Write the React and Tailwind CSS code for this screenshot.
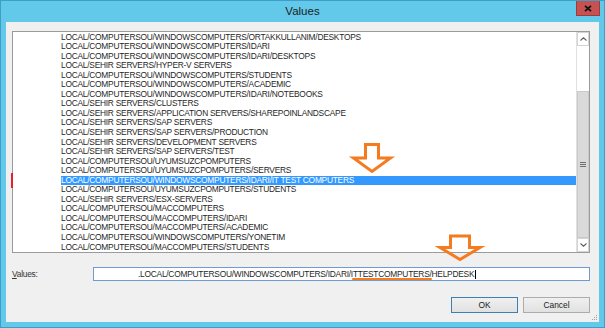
import React from "react";

const rows = [
  "LOCAL/COMPUTERSOU/WINDOWSCOMPUTERS/ORTAKKULLANIM/DESKTOPS",
  "LOCAL/COMPUTERSOU/WINDOWSCOMPUTERS/IDARI",
  "LOCAL/COMPUTERSOU/WINDOWSCOMPUTERS/IDARI/DESKTOPS",
  "LOCAL/SEHIR SERVERS/HYPER-V SERVERS",
  "LOCAL/COMPUTERSOU/WINDOWSCOMPUTERS/STUDENTS",
  "LOCAL/COMPUTERSOU/WINDOWSCOMPUTERS/ACADEMIC",
  "LOCAL/COMPUTERSOU/WINDOWSCOMPUTERS/IDARI/NOTEBOOKS",
  "LOCAL/SEHIR SERVERS/CLUSTERS",
  "LOCAL/SEHIR SERVERS/APPLICATION SERVERS/SHAREPOINLANDSCAPE",
  "LOCAL/SEHIR SERVERS/SAP SERVERS",
  "LOCAL/SEHIR SERVERS/SAP SERVERS/PRODUCTION",
  "LOCAL/SEHIR SERVERS/DEVELOPMENT SERVERS",
  "LOCAL/SEHIR SERVERS/SAP SERVERS/TEST",
  "LOCAL/COMPUTERSOU/UYUMSUZCPOMPUTERS",
  "LOCAL/COMPUTERSOU/UYUMSUZCPOMPUTERS/SERVERS",
  "LOCAL/COMPUTERSOU/WINDOWSCOMPUTERS/IDARI/IT TEST COMPUTERS",
  "LOCAL/COMPUTERSOU/UYUMSUZCPOMPUTERS/STUDENTS",
  "LOCAL/SEHIR SERVERS/ESX-SERVERS",
  "LOCAL/COMPUTERSOU/MACCOMPUTERS",
  "LOCAL/COMPUTERSOU/MACCOMPUTERS/IDARI",
  "LOCAL/COMPUTERSOU/MACCOMPUTERS/ACADEMIC",
  "LOCAL/COMPUTERSOU/WINDOWSCOMPUTERS/YONETIM",
  "LOCAL/COMPUTERSOU/MACCOMPUTERS/STUDENTS",
];

const SELECTED = 15;

export default function App() {
  return (
    <div className="w-[605px] h-[328px] bg-[#62c9ea] border border-[#3f9ec8] flex flex-col relative overflow-hidden font-['Liberation_Sans',Arial,sans-serif]">
      {/* Title bar */}
      <div className="h-[21px] flex items-center justify-center shrink-0">
        <span className="text-[11.5px] text-[#1d1d1d] leading-none pt-[1px]">Values</span>
      </div>

      {/* Close button */}
      <div className="absolute top-[-1px] right-[4px] w-[24px] h-[16px] bg-[#c75050] border border-[#9e3c3c] flex items-center justify-center">
        <svg width="8" height="7" viewBox="0 0 8 7">
          <path d="M1 0.8 L7 6.2 M7 0.8 L1 6.2" stroke="#111" strokeWidth="1.8" />
        </svg>
      </div>

      {/* Client area */}
      <div className="flex-1 mx-[5px] mb-[5px] bg-[#f0f0f0] pl-[6px] pr-[9px] pt-[9px] flex flex-col relative">
        {/* Listbox */}
        <div className="w-[578px] h-[222px] border border-[#9b9b9b] bg-white flex shrink-0">
          <div className="w-[563px] h-full overflow-hidden pt-[0.5px]">
            {rows.map((r, i) => (
              <div key={i} className="h-[9.55px] pl-[48px] text-[8.4px] tracking-[-0.25px] leading-[9.55px] whitespace-nowrap">
                {i === SELECTED ? (
                  <div className="bg-[#3399ff] text-white h-full">{r}</div>
                ) : (
                  <div className="text-[#1f1f1f] h-full">{r}</div>
                )}
              </div>
            ))}
          </div>
          {/* Scrollbar */}
          <div className="w-[13px] h-full flex flex-col bg-white border-l border-[#e0e0e0]">
            <div className="h-[14px] border border-[#d4d4d4] bg-white flex items-center justify-center shrink-0">
              <svg width="7" height="4" viewBox="0 0 7 4">
                <path d="M0.5 3.5 L3.5 0.8 L6.5 3.5" stroke="#606060" strokeWidth="1.1" fill="none" />
              </svg>
            </div>
            <div className="h-[45px] bg-white shrink-0" />
            <div className="h-[147px] bg-[#dadada] border border-[#c9c9c9] flex items-center justify-center shrink-0">
              <div className="flex flex-col gap-[1px]">
                <div className="w-[6px] h-[1px] bg-[#6e6e6e]" />
                <div className="w-[6px] h-[1px] bg-[#6e6e6e]" />
                <div className="w-[6px] h-[1px] bg-[#6e6e6e]" />
              </div>
            </div>
            <div className="h-[14px] border border-[#d4d4d4] bg-white flex items-center justify-center shrink-0">
              <svg width="7" height="4" viewBox="0 0 7 4">
                <path d="M0.5 0.5 L3.5 3.2 L6.5 0.5" stroke="#606060" strokeWidth="1.1" fill="none" />
              </svg>
            </div>
          </div>
        </div>

        {/* Values row */}
        <div className="mt-[14px] h-[14px] flex items-center shrink-0">
          <div className="w-[81px] text-[8.4px] tracking-[-0.25px] text-[#333]">
            <span className="underline">V</span>alues:
          </div>
          <div className="w-[497px] h-[14px] border border-[#6f9cd0] bg-white flex items-center pl-[44px] text-[8.4px] tracking-[-0.25px] text-[#1f1f1f] whitespace-nowrap">
            <span>.LOCAL/COMPUTERSOU/WINDOWSCOMPUTERS/IDARI/</span>
            <span className="relative">
              ITTESTCOMPUTERS
              <span className="absolute left-[1px] right-[-3px] top-[10px] h-[2px] rounded-full bg-[#f47b20]" />
            </span>
            <span>/HELPDESK</span>
            <span className="w-[1px] h-[9px] bg-black ml-[1px]" />
          </div>
        </div>

        {/* Buttons */}
        <div className="mt-[16px] flex justify-end gap-[5px] shrink-0">
          <div className="w-[67px] h-[16px] border border-[#3c7fb1] bg-gradient-to-b from-[#f0f0f0] to-[#e1e1e1] flex items-center justify-center text-[8.4px] text-[#1a1a1a]">
            OK
          </div>
          <div className="w-[67px] h-[16px] border border-[#acacac] bg-gradient-to-b from-[#f0f0f0] to-[#e1e1e1] flex items-center justify-center text-[8.4px] text-[#1a1a1a]">
            Cancel
          </div>
        </div>

        {/* Size grip */}
        <svg className="absolute right-[1px] bottom-[1px]" width="7" height="7" viewBox="0 0 7 7">
          <rect x="5" y="1" width="1" height="1" fill="#a0a0a0" />
          <rect x="3" y="3" width="1" height="1" fill="#a0a0a0" />
          <rect x="5" y="3" width="1" height="1" fill="#a0a0a0" />
          <rect x="1" y="5" width="1" height="1" fill="#a0a0a0" />
          <rect x="3" y="5" width="1" height="1" fill="#a0a0a0" />
          <rect x="5" y="5" width="1" height="1" fill="#a0a0a0" />
        </svg>
      </div>

      {/* Overlays: red marker & orange arrows */}
      <svg className="absolute top-[-1px] left-[-1px] pointer-events-none" width="605" height="328" viewBox="0 0 605 328">
        <rect x="11" y="173" width="2" height="15" fill="#e3202b" />
        <path
          d="M365.5 144.5 L378.5 144.5 L378.5 158 L390.5 158 L372 171.5 L353.5 158 L365.5 158 Z"
          fill="none"
          stroke="#f47b20"
          strokeWidth="3"
          strokeLinejoin="miter"
        />
        <path
          d="M450.5 236 L469.5 236 L469.5 247.5 L480 247.5 L460 259.5 L440 247.5 L450.5 247.5 Z"
          fill="none"
          stroke="#f47b20"
          strokeWidth="3"
          strokeLinejoin="miter"
        />
      </svg>
    </div>
  );
}
